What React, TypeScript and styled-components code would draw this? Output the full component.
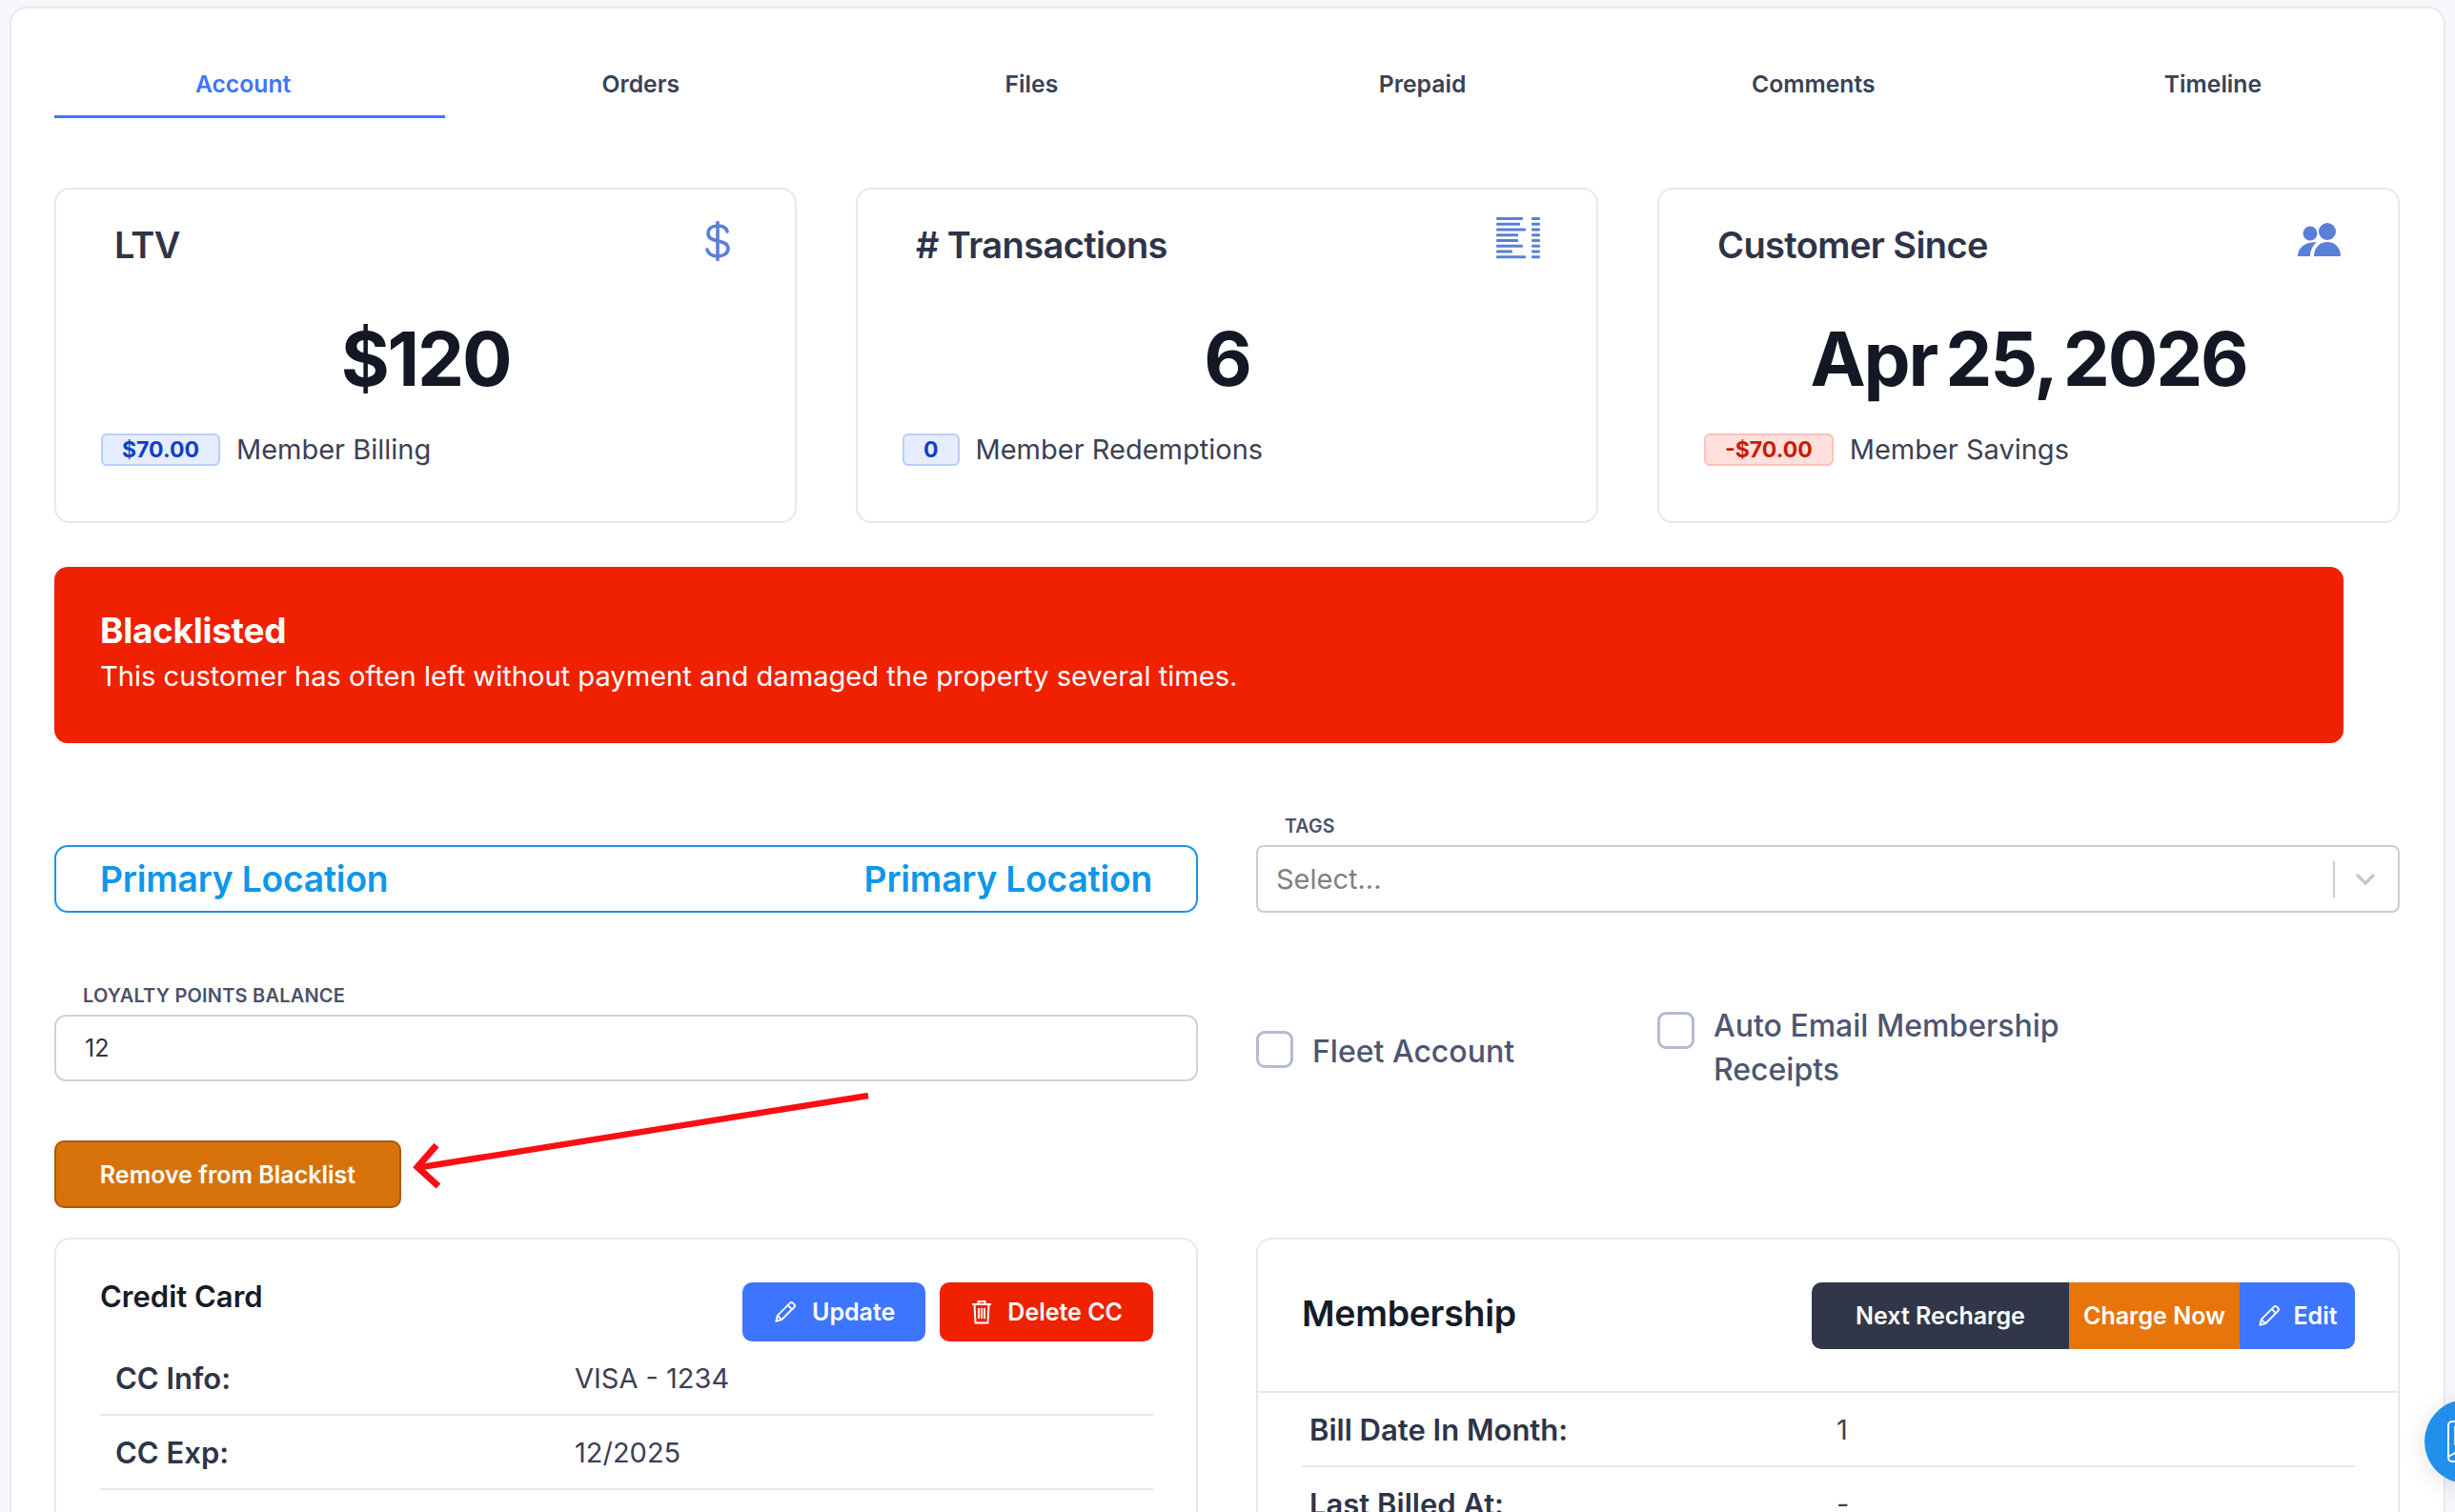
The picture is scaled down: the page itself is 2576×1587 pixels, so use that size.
import styled, { createGlobalStyle } from "styled-components"

const GlobalStyle = createGlobalStyle`
    html, body {
        margin: 0;
        height: 1587px;
        overflow: hidden;
        background: #f5f7fb;
        font-family: Inter, "Liberation Sans", sans-serif;
        color: #2e3448;
    }
    * { box-sizing: border-box; }
`

const tabs = ["Account", "Orders", "Files", "Prepaid", "Comments", "Timeline"]

function DollarIcon() {
    return <svg width="26" height="42" viewBox="0 0 26 42" fill="none" stroke="#5a7fd8" strokeWidth="3.6" strokeLinecap="round">
        <path d="M13 1.5v39" />
        <path d="M23 11c-1-4-5-6-10-6-6 0-10 3-10 8 0 11 21 5 21 16 0 5-5 8-11 8-6 0-10-3-11-7" />
    </svg>
}

function LinesIcon() {
    const left = [28, 25, 31, 23, 23, 28, 17, 31]
    return <svg width="46" height="44" viewBox="0 0 46 44" fill="#5a7fd8">
        {left.map((w, i) => <g key={i}>
            <rect x="0" y={i * 5.75} width={w} height="3" rx="1" />
            <rect x="37" y={i * 5.75} width="9" height="3" rx="1" />
        </g>)}
    </svg>
}

function PeopleIcon() {
    return <svg width="46" height="36" viewBox="0 0 46 36" fill="#5a7fd8">
        <circle cx="13" cy="11" r="7.5" />
        <circle cx="31" cy="9" r="9" />
        <path d="M0 35c0-8 6-15 20-15-4 3-7 9-7 15z" />
        <path d="M17 35c0-9 6-15 14-15s14 6 14 15z" />
    </svg>
}

function PencilIcon() {
    return <svg width="26" height="26" viewBox="0 0 24 24" fill="none" stroke="#fff" strokeWidth="1.7" strokeLinejoin="round">
        <path d="M3 21l1.4-5.4L16.6 3.4a2 2 0 0 1 2.8 0l1.2 1.2a2 2 0 0 1 0 2.8L8.4 19.6z" />
        <path d="M14.5 5.5l4 4M4.4 15.6l4 4" />
    </svg>
}

function TrashIcon() {
    return <svg width="24" height="26" viewBox="0 0 22 26" fill="none" stroke="#fff" strokeWidth="2">
        <path d="M1 5h20M7.5 5V2h7v3" />
        <path d="M3.5 5l1 19.5h13l1-19.5" />
        <path d="M8 9v11M11 9v11M14 9v11" />
    </svg>
}

function ChevronIcon() {
    return <svg width="22" height="14" viewBox="0 0 22 14" fill="none" stroke="#c6c8cc" strokeWidth="3.4">
        <path d="M2 2l9 9 9-9" />
    </svg>
}

function ArrowIcon() {
    return <svg width="490" height="104" viewBox="0 0 490 104" fill="none" stroke="#f80f14" strokeWidth="6.5">
        <path d="M481 3L12 78" />
        <path d="M28 55L8 78l22 20" strokeWidth="7" />
    </svg>
}

function BookIcon() {
    return <svg width="40" height="44" viewBox="0 0 40 44" fill="none" stroke="#fff" strokeWidth="2">
        <rect x="2" y="1" width="36" height="42" rx="4" />
        <path d="M2 38l12-7h24" />
        <path d="M8 6h28v20H8z" fill="#cfe6fb" stroke="none" />
    </svg>
}

export default function App() {
    return <>
        <GlobalStyle />
        <Page>
            <Panel>
                <Tabs>
                    {tabs.map((t, i) => <Tab key={t} $active={i === 0}>{t}</Tab>)}
                </Tabs>

                <Stats>
                    <StatCard>
                        <StatHead>
                            <StatTitle>LTV</StatTitle>
                            <StatIcon $right={21} $top={-2}><DollarIcon /></StatIcon>
                        </StatHead>
                        <StatValue>$120</StatValue>
                        <StatFoot>
                            <Badge $tone="blue">$70.00</Badge>
                            <span>Member Billing</span>
                        </StatFoot>
                    </StatCard>
                    <StatCard>
                        <StatHead>
                            <StatTitle># Transactions</StatTitle>
                            <StatIcon $right={12} $top={-6}><LinesIcon /></StatIcon>
                        </StatHead>
                        <StatValue>6</StatValue>
                        <StatFoot>
                            <Badge $tone="blue">0</Badge>
                            <span>Member Redemptions</span>
                        </StatFoot>
                    </StatCard>
                    <StatCard>
                        <StatHead>
                            <StatTitle>Customer Since</StatTitle>
                            <StatIcon $right={12} $top={0}><PeopleIcon /></StatIcon>
                        </StatHead>
                        <StatValue>Apr 25, 2026</StatValue>
                        <StatFoot>
                            <Badge $tone="red">-$70.00</Badge>
                            <span>Member Savings</span>
                        </StatFoot>
                    </StatCard>
                </Stats>

                <Banner>
                    <BannerTitle>Blacklisted</BannerTitle>
                    <BannerText>This customer has often left without payment and damaged the property several times.</BannerText>
                </Banner>

                <FormGrid>
                    <Field>
                        <LocationBox>
                            <span>Primary Location</span>
                            <span>Primary Location</span>
                        </LocationBox>
                    </Field>
                    <Field>
                        <TagsLabel>TAGS</TagsLabel>
                        <SelectBox>
                            <span>Select...</span>
                            <SelectRight>
                                <SelectBar />
                                <ChevronIcon />
                            </SelectRight>
                        </SelectBox>
                    </Field>
                    <Field>
                        <FieldLabel>LOYALTY POINTS BALANCE</FieldLabel>
                        <InputBox>12</InputBox>
                    </Field>
                    <Checks>
                        <CheckItem $center>
                            <CheckBox />
                            <FleetText>Fleet Account</FleetText>
                        </CheckItem>
                        <CheckItem>
                            <CheckBox />
                            <CheckText>Auto Email Membership<br />Receipts</CheckText>
                        </CheckItem>
                    </Checks>
                </FormGrid>

                <ActionRow>
                    <BlacklistButton>Remove from Blacklist</BlacklistButton>
                    <ArrowWrap><ArrowIcon /></ArrowWrap>
                </ActionRow>

                <Cards>
                    <InfoCard>
                        <CardHead>
                            <CardTitle>Credit Card</CardTitle>
                            <CardActions>
                                <ActionButton $bg="#3d75ff"><PencilIcon />Update</ActionButton>
                                <ActionButton $bg="#ef2100"><TrashIcon />Delete CC</ActionButton>
                            </CardActions>
                        </CardHead>
                        <InfoRow $labelWidth={482}>
                            <RowLabel>CC Info:</RowLabel>
                            <RowValue>VISA - 1234</RowValue>
                        </InfoRow>
                        <InfoRow $labelWidth={482}>
                            <RowLabel>CC Exp:</RowLabel>
                            <RowValue>12/2025</RowValue>
                        </InfoRow>
                    </InfoCard>
                    <InfoCard $flush>
                        <MemberHead>
                            <MemberTitle>Membership</MemberTitle>
                            <SplitButtons>
                                <SplitButton $bg="#313749" $width={270}>Next Recharge</SplitButton>
                                <SplitButton $bg="#e8750a" $width={179}>Charge Now</SplitButton>
                                <SplitButton $bg="#3d75ff" $width={121}><PencilIcon />Edit</SplitButton>
                            </SplitButtons>
                        </MemberHead>
                        <MemberBody>
                            <InfoRow $labelWidth={553} $tall>
                                <RowLabel>Bill Date In Month:</RowLabel>
                                <RowValue>1</RowValue>
                            </InfoRow>
                            <InfoRow $labelWidth={553} $tall>
                                <RowLabel>Last Billed At:</RowLabel>
                                <RowValue>-</RowValue>
                            </InfoRow>
                        </MemberBody>
                    </InfoCard>
                </Cards>
            </Panel>
            <FloatButton><BookIcon /></FloatButton>
        </Page>
    </>
}

const Page = styled.div`
    height: 1587px;
    padding: 7px 0 0 10px;
    overflow: hidden;
    position: relative;
`

const Panel = styled.main`
    width: 2556px;
    height: 1640px;
    background: #fff;
    border: 2px solid #e8eaf1;
    border-radius: 18px;
    padding: 0 46px 0 45px;
`

const Tabs = styled.nav`
    display: grid;
    grid-template-columns: repeat(6, 1fr);
    height: 115px;
`

const Tab = styled.div<{ $active?: boolean }>`
    display: flex;
    align-items: center;
    justify-content: center;
    padding-top: 46px;
    font-size: 24.7px;
    font-weight: 600;
    color: ${p => p.$active ? "#3d75ff" : "#3b4154"};
    border-bottom: 3px solid ${p => p.$active ? "#3d75ff" : "transparent"};

    &:first-child { padding-right: 14px; }
    &:last-child { padding-left: 18px; }
`

const Stats = styled.section`
    display: grid;
    grid-template-columns: repeat(3, 779px);
    justify-content: space-between;
    margin-top: 73px;
`

const StatCard = styled.article`
    height: 352px;
    border: 2px solid #e6e8f0;
    border-radius: 16px;
    padding: 0 47px;
    display: flex;
    flex-direction: column;
`

const StatHead = styled.div`
    display: flex;
    justify-content: space-between;
    height: 72px;
    margin-top: 35px;
    padding-left: 14px;
`

const StatTitle = styled.h3`
    margin: 0;
    font-size: 38px;
    font-weight: 600;
    letter-spacing: -0.6px;
    line-height: 46px;
    color: #2e3448;
`

const StatIcon = styled.div<{ $right: number; $top: number }>`
    margin-right: ${p => p.$right}px;
    margin-top: ${p => p.$top}px;
`

const StatValue = styled.div`
    text-align: center;
    font-size: 78px;
    font-weight: 700;
    line-height: 88px;
    letter-spacing: -2.2px;
    word-spacing: -7px;
    color: #141824;
    margin-top: 27px;
`

const StatFoot = styled.div`
    display: flex;
    align-items: center;
    gap: 17px;
    font-size: 29px;
    color: #3b4154;
    margin-top: 32px;
`

const Badge = styled.span<{ $tone: "blue" | "red" }>`
    padding: 0 20px;
    height: 34px;
    display: inline-flex;
    align-items: center;
    font-size: 23px;
    font-weight: 700;
    border-radius: 6px;
    margin-top: 2px;
    color: ${p => p.$tone === "blue" ? "#0f3fc7" : "#c81c00"};
    background: ${p => p.$tone === "blue" ? "#e5edff" : "#ffe0dc"};
    border: 2px solid ${p => p.$tone === "blue" ? "#b9cdf9" : "#fbc2ba"};
`

const Banner = styled.section`
    margin-top: 46px;
    width: 2402px;
    height: 185px;
    background: #ef2100;
    border-radius: 14px;
    color: #fff;
    padding: 44px 48px 0;
`

const BannerTitle = styled.div`
    font-size: 37px;
    font-weight: 700;
    line-height: 46px;
    letter-spacing: -0.3px;
`

const BannerText = styled.div`
    font-size: 29.1px;
    line-height: 50px;
`

const FormGrid = styled.section`
    display: grid;
    grid-template-columns: 1200px 1200px;
    justify-content: space-between;
    grid-template-rows: 71px 102px;
    row-gap: 75px;
    margin-top: 107px;
    align-items: start;
`

const Field = styled.div`
    position: relative;
`

const FieldLabel = styled.label`
    display: block;
    font-size: 20px;
    font-weight: 600;
    letter-spacing: 0.2px;
    color: #4b5266;
    padding-left: 30px;
    margin: 0 0 8px;
    line-height: 24px;
`

const TagsLabel = styled(FieldLabel)`
    position: absolute;
    top: -32px;
    left: 0;
    margin: 0;
    font-size: 19.5px;
`

const LocationBox = styled.div`
    height: 71px;
    border: 2px solid #1a94e8;
    border-radius: 14px;
    display: flex;
    justify-content: space-between;
    align-items: center;
    padding: 0 46px;
    font-size: 37.2px;
    font-weight: 600;
    letter-spacing: -0.2px;
    color: #0f97e9;
`

const SelectBox = styled.div`
    height: 71px;
    border: 2px solid #cccccf;
    border-radius: 8px;
    display: flex;
    justify-content: space-between;
    align-items: center;
    padding: 0 23px 0 19px;
    font-size: 29px;
    color: #808080;
`

const SelectRight = styled.div`
    display: flex;
    align-items: center;
    gap: 21px;
`

const SelectBar = styled.div`
    width: 2px;
    height: 38px;
    background: #cccccc;
`

const InputBox = styled.div`
    height: 70px;
    border: 2px solid #cfd2dc;
    border-radius: 12px;
    display: flex;
    align-items: center;
    padding-left: 30px;
    font-size: 25px;
    color: #2e3448;
`

const Checks = styled.div`
    display: flex;
    padding-top: 29px;
`

const CheckItem = styled.label<{ $center?: boolean }>`
    display: flex;
    gap: 20px;
    width: 421px;
    font-size: 32px;
    font-weight: 500;
    line-height: 46px;
    color: #4d5670;
    align-items: ${p => p.$center ? "center" : "flex-start"};
    height: ${p => p.$center ? "79px" : "auto"};
`

const CheckText = styled.span`
    white-space: nowrap;
    margin-top: -8px;
`

const FleetText = styled.span`
    padding-top: 4px;
`

const CheckBox = styled.span`
    width: 39px;
    height: 39px;
    flex: none;
    border: 3px solid #b4bcd3;
    border-radius: 9px;
    background: #fff;
`

const ActionRow = styled.div`
    position: relative;
    margin-top: 62px;
    height: 71px;
`

const BlacklistButton = styled.button`
    width: 364px;
    height: 71px;
    background: #d7720b;
    border: 2px solid #a9590a;
    border-radius: 10px;
    color: #fff;
    font-family: inherit;
    font-size: 25px;
    font-weight: 600;
    padding: 0;
`

const ArrowWrap = styled.div`
    position: absolute;
    left: 373px;
    top: -50px;
`

const Cards = styled.section`
    display: grid;
    grid-template-columns: 1200px 1200px;
    justify-content: space-between;
    margin-top: 31px;
`

const InfoCard = styled.article<{ $flush?: boolean }>`
    height: 400px;
    border: 2px solid #e6e8f0;
    border-radius: 16px;
    padding: ${p => p.$flush ? "0" : "45px 45px 0 46px"};
`

const CardHead = styled.div`
    display: flex;
    justify-content: space-between;
    align-items: flex-start;
`

const CardTitle = styled.h4`
    margin: 0;
    font-size: 31px;
    font-weight: 600;
    line-height: 30px;
    color: #161b28;
`

const CardActions = styled.div`
    display: flex;
    gap: 15px;
`

const ActionButton = styled.button<{ $bg: string }>`
    height: 62px;
    padding: 0 32px;
    display: flex;
    align-items: center;
    gap: 15px;
    border: 0;
    border-radius: 10px;
    background: ${p => p.$bg};
    color: #fff;
    font-family: inherit;
    font-size: 25px;
    font-weight: 600;
`

const InfoRow = styled.div<{ $labelWidth: number; $tall?: boolean }>`
    display: grid;
    grid-template-columns: ${p => p.$labelWidth}px 1fr;
    height: 78px;
    align-items: center;
    padding-left: ${p => p.$tall ? 8 : 16}px;
    border-bottom: 2px solid #e6e8f0;
    font-size: 31px;
`

const RowLabel = styled.div`
    font-weight: 600;
    color: #2e3448;
    font-size: 31px;
`

const RowValue = styled.div`
    font-size: 29px;
    color: #3b4154;
`

const MemberHead = styled.div`
    height: 161px;
    padding: 45px 45px 0 46px;
    border-bottom: 2px solid #e6e8f0;
    display: flex;
    justify-content: space-between;
    align-items: flex-start;
`

const MemberTitle = styled.h4`
    margin: 0;
    font-size: 37.5px;
    font-weight: 600;
    line-height: 66px;
    letter-spacing: -0.3px;
    color: #161b28;
`

const SplitButtons = styled.div`
    display: flex;
    height: 70px;
    border-radius: 10px;
    overflow: hidden;
`

const SplitButton = styled.button<{ $bg: string; $width: number }>`
    width: ${p => p.$width}px;
    height: 70px;
    border: 0;
    padding: 0;
    display: flex;
    align-items: center;
    justify-content: center;
    gap: 12px;
    background: ${p => p.$bg};
    color: #fff;
    font-family: inherit;
    font-size: 25px;
    font-weight: 600;
`

const MemberBody = styled.div`
    padding: 0 45px 0 46px;
`

const FloatButton = styled.div`
    position: fixed;
    left: 2544px;
    top: 1469px;
    width: 88px;
    height: 88px;
    border-radius: 50%;
    background: #2090ec;
    display: flex;
    align-items: center;
    padding-left: 23px;
    box-shadow: 0 4px 24px rgba(0, 0, 0, 0.12);
`
